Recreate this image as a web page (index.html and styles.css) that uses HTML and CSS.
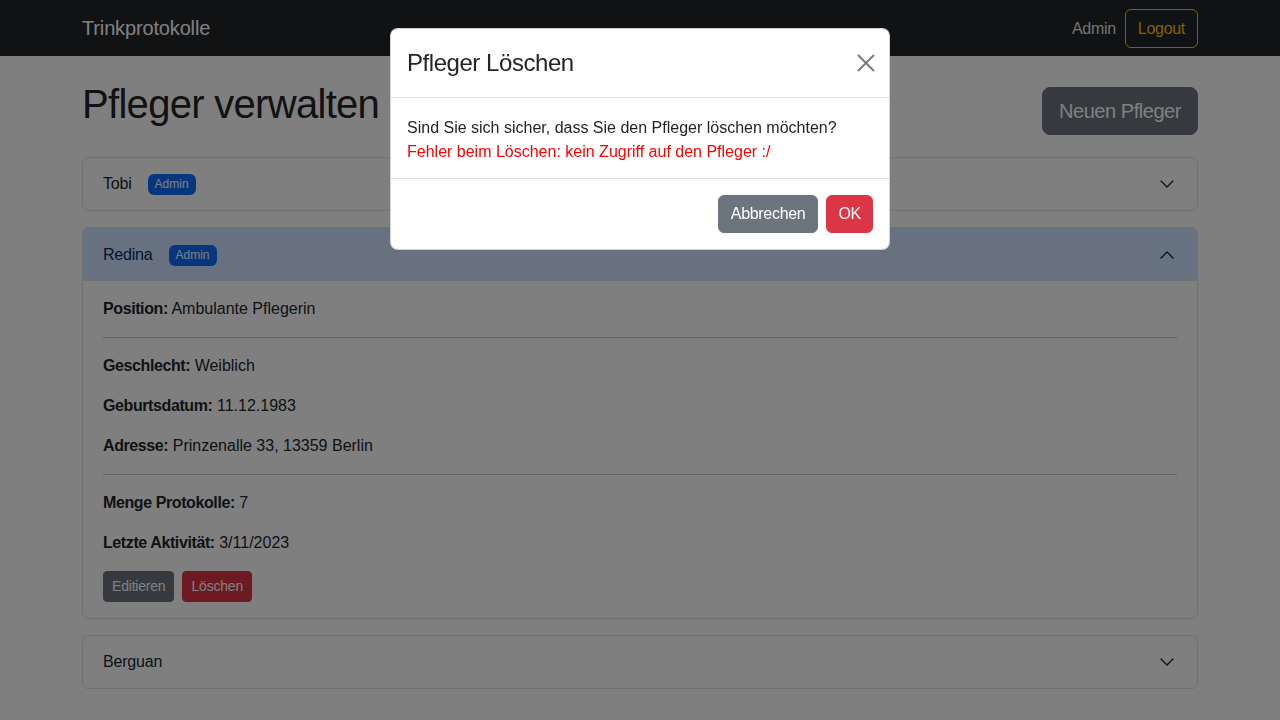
FILE: index.html
```html
<!DOCTYPE html>
<html lang="de">
<head>
<meta charset="utf-8">
<title>Trinkprotokolle</title>
<link rel="stylesheet" href="styles.css">
</head>
<body>
<nav class="navbar">
  <div class="container nav-inner">
    <span class="brand">Trinkprotokolle</span>
    <div class="nav-right">
      <span class="nav-user">Admin</span>
      <button class="btn btn-outline-warning">Logout</button>
    </div>
  </div>
</nav>

<main class="container">
  <div class="page-head">
    <h1 class="title">Pfleger verwalten</h1>
    <button class="btn btn-lg btn-secondary">Neuen Pfleger</button>
  </div>

  <div class="acc-item">
    <div class="acc-header">
      <span class="acc-name">Tobi</span><span class="badge">Admin</span>
      <svg class="chev" viewBox="0 0 16 16" width="16" height="16"><path d="M2 5L8 11L14 5" fill="none" stroke="#212529" stroke-width="1.4" stroke-linecap="round" stroke-linejoin="round"/></svg>
    </div>
  </div>

  <div class="acc-item">
    <div class="acc-header active">
      <span class="acc-name">Redina</span><span class="badge">Admin</span>
      <svg class="chev up" viewBox="0 0 16 16" width="16" height="16"><path d="M2 5L8 11L14 5" fill="none" stroke="#052c65" stroke-width="1.4" stroke-linecap="round" stroke-linejoin="round"/></svg>
    </div>
    <div class="acc-body">
      <p><strong>Position:</strong> Ambulante Pflegerin</p>
      <hr>
      <p><strong>Geschlecht:</strong> Weiblich</p>
      <p><strong>Geburtsdatum:</strong> 11.12.1983</p>
      <p><strong>Adresse:</strong> Prinzenalle 33, 13359 Berlin</p>
      <hr>
      <p><strong>Menge Protokolle:</strong> 7</p>
      <p><strong>Letzte Aktivität:</strong> 3/11/2023</p>
      <div class="actions">
        <button class="btn btn-sm btn-secondary">Editieren</button>
        <button class="btn btn-sm btn-danger">Löschen</button>
      </div>
    </div>
  </div>

  <div class="acc-item">
    <div class="acc-header">
      <span class="acc-name">Berguan</span>
      <svg class="chev" viewBox="0 0 16 16" width="16" height="16"><path d="M2 5L8 11L14 5" fill="none" stroke="#212529" stroke-width="1.4" stroke-linecap="round" stroke-linejoin="round"/></svg>
    </div>
  </div>
</main>

<div class="backdrop"></div>
<div class="modal">
  <div class="modal-content">
    <div class="modal-header">
      <h4 class="modal-title">Pfleger Löschen</h4>
      <button class="btn-close" aria-label="Close">
        <svg viewBox="0 0 18 18" width="18" height="18"><path d="M1 1L17 17M17 1L1 17" stroke="#7a7a7a" stroke-width="2" stroke-linecap="butt"/></svg>
      </button>
    </div>
    <div class="modal-body">
      <div>Sind Sie sich sicher, dass Sie den Pfleger löschen möchten?</div>
      <div class="error">Fehler beim Löschen: kein Zugriff auf den Pfleger :/</div>
    </div>
    <div class="modal-footer">
      <button class="btn btn-secondary">Abbrechen</button>
      <button class="btn btn-danger btn-ok">OK</button>
    </div>
  </div>
</div>
</body>
</html>
```

FILE: styles.css
```css
* { box-sizing: border-box; }

html, body {
  margin: 0;
  padding: 0;
}

body {
  font-family: "Liberation Sans", Arial, sans-serif;
  font-size: 16px;
  line-height: 1.5;
  color: #212529;
  background: #fff;
  height: 720px;
  overflow: hidden;
}

.container {
  width: 1140px;
  margin: 0 auto;
  padding: 0 12px;
}

.navbar {
  background: #212529;
  height: 56px;
}

.nav-inner {
  height: 56px;
  display: flex;
  align-items: center;
  justify-content: space-between;
}

.brand {
  font-size: 20px;
  line-height: 30px;
  color: #fff;
  letter-spacing: -0.15px;
}

.nav-right {
  display: flex;
  align-items: center;
}

.nav-user {
  color: rgba(255, 255, 255, 0.9);
  margin-right: 9px;
  padding-top: 2px;
  letter-spacing: -0.3px;
}

.btn {
  font-family: inherit;
  font-size: 16px;
  line-height: 24px;
  padding: 6px 12px;
  border: 1px solid transparent;
  border-radius: 6px;
  color: #fff;
  cursor: pointer;
  letter-spacing: -0.3px;
}

.btn-outline-warning {
  background: transparent;
  color: #ffc107;
  border-color: #ffc107;
  padding-top: 7px;
}

.btn-secondary {
  background: #6c757d;
  border-color: #6c757d;
}

.btn-danger {
  background: #dc3545;
  border-color: #dc3545;
}

.btn-ok {
  padding: 6px 11px;
}

.btn-lg {
  font-size: 20px;
  line-height: 30px;
  padding: 8px 16px;
  border-radius: 8px;
  letter-spacing: -0.45px;
}

.btn-sm {
  font-size: 14px;
  line-height: 21px;
  padding: 4px 8px;
  border-radius: 4px;
  letter-spacing: -0.2px;
}

.page-head {
  display: flex;
  justify-content: space-between;
  align-items: flex-start;
  margin-top: 24px;
  margin-bottom: 22px;
}

.title {
  margin: 0;
  font-size: 40px;
  line-height: 48px;
  font-weight: 400;
  letter-spacing: -0.7px;
}

.page-head .btn-lg {
  margin-top: 7px;
}

.acc-item {
  border: 1px solid #dee2e6;
  border-radius: 6px;
  margin-bottom: 16px;
  overflow: hidden;
}

.acc-header {
  display: flex;
  align-items: center;
  padding: 14px 22px 14px 20px;
  line-height: 24px;
}

.acc-header.active {
  background: #cfe2ff;
  color: #052c65;
  border-bottom: 1px solid #dee2e6;
  padding-top: 15px;
  padding-bottom: 13px;
}

.acc-name {
  margin-right: 16px;
  letter-spacing: -0.2px;
}

.badge {
  display: inline-block;
  background: #0d6efd;
  color: #fff;
  font-size: 12px;
  line-height: 13px;
  padding: 4px 7px;
  border-radius: 6px;
}

.chev {
  margin-left: auto;
  display: block;
}

.chev.up {
  transform: rotate(180deg);
}

.acc-body {
  padding: 16px 20px;
}

.acc-body p {
  margin: 0 0 16px;
}

.acc-body strong {
  font-weight: 600;
  letter-spacing: -0.4px;
}

.acc-body hr {
  border: 0;
  border-top: 1px solid #c8c9ca;
  margin: 16px 0;
  height: 0;
}

.actions {
  display: flex;
  gap: 8px;
}

.backdrop {
  position: fixed;
  inset: 0;
  background: rgba(0, 0, 0, 0.5);
}

.modal {
  position: fixed;
  inset: 0;
}

.modal-content {
  width: 500px;
  margin: 28px auto 0;
  background: #fff;
  border: 1px solid rgba(0, 0, 0, 0.175);
  border-radius: 8px;
}

.modal-header {
  display: flex;
  align-items: center;
  justify-content: space-between;
  padding: 16px;
  border-bottom: 1px solid #dee2e6;
}

.modal-title {
  margin: 0;
  font-size: 24px;
  line-height: 36px;
  font-weight: 400;
  letter-spacing: -0.45px;
}

.btn-close {
  background: none;
  border: 0;
  padding: 0;
  width: 18px;
  height: 18px;
  margin-right: -2px;
  cursor: pointer;
}

.btn-close svg {
  display: block;
}

.modal-body {
  padding: 18px 16px 14px;
}

.error {
  color: #ff0000;
}

.modal-footer {
  display: flex;
  justify-content: flex-end;
  padding: 12px;
  border-top: 1px solid #dee2e6;
}

.modal-footer .btn {
  margin: 4px;
}
```
